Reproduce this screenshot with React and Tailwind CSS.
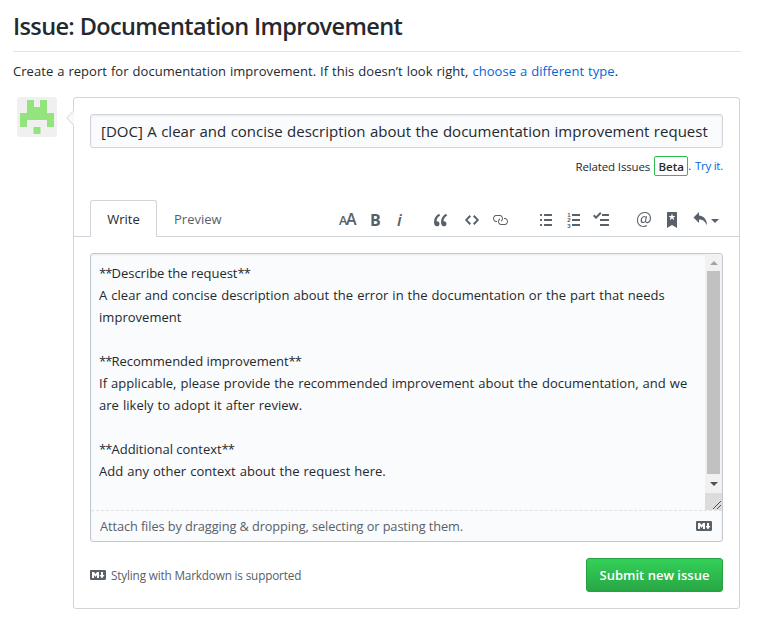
const paths = {
  quote: [14, "M6.16 3.5C3.73 5.06 2.55 6.67 2.55 9.36c.16-.05.3-.05.44-.05 1.27 0 2.5.86 2.5 2.41 0 1.61-1.03 2.61-2.5 2.61-1.9 0-2.99-1.52-2.99-4.25 0-3.8 1.75-6.53 5.02-8.42L6.16 3.5zm7 0c-2.43 1.56-3.61 3.17-3.61 5.86.16-.05.3-.05.44-.05 1.27 0 2.5.86 2.5 2.41 0 1.61-1.03 2.61-2.5 2.61-1.89 0-2.98-1.52-2.98-4.25 0-3.8 1.75-6.53 5.02-8.42l1.14 1.84h-.01z"],
  code: [14, "M9.5 3L8 4.5 11.5 8 8 11.5 9.5 13 14 8 9.5 3zm-5 0L0 8l4.5 5L6 11.5 2.5 8 6 4.5 4.5 3z"],
  link: [16, "M4 9h1v1H4c-1.5 0-3-1.69-3-3.5S2.55 3 4 3h4c1.45 0 3 1.69 3 3.5 0 1.41-.91 2.72-2 3.25V8.59c.58-.45 1-1.27 1-2.09C10 5.22 8.98 4 8 4H4c-.98 0-2 1.22-2 2.5S3 9 4 9zm9-3h-1v1h1c1 0 2 1.22 2 2.5S13.98 12 13 12H9c-.98 0-2-1.22-2-2.5 0-.83.42-1.64 1-2.09V6.25c-1.09.53-2 1.84-2 3.25C6 11.31 7.55 13 9 13h4c1.45 0 3-1.69 3-3.5S14.5 6 13 6z"],
  bullets: [12, "M2 13c0 .59 0 1-.59 1H.59C0 14 0 13.59 0 13c0-.59 0-1 .59-1h.81c.59 0 .59.41.59 1H2zm2.59-9h6.81c.59 0 .59-.41.59-1 0-.59 0-1-.59-1H4.59C4 2 4 2.41 4 3c0 .59 0 1 .59 1zM1.41 7H.59C0 7 0 7.41 0 8c0 .59 0 1 .59 1h.81c.59 0 .59-.41.59-1 0-.59 0-1-.59-1h.01zm0-5H.59C0 2 0 2.41 0 3c0 .59 0 1 .59 1h.81c.59 0 .59-.41.59-1 0-.59 0-1-.59-1h.01zm10 5H4.59C4 7 4 7.41 4 8c0 .59 0 1 .59 1h6.81c.59 0 .59-.41.59-1 0-.59 0-1-.59-1h.01zm0 5H4.59C4 12 4 12.41 4 13c0 .59 0 1 .59 1h6.81c.59 0 .59-.41.59-1 0-.59 0-1-.59-1h.01z"],
  tasks: [16, "M15.41 9H7.59C7 9 7 8.59 7 8c0-.59 0-1 .59-1h7.81c.59 0 .59.41.59 1 0 .59 0 1-.59 1h.01zM9.59 4C9 4 9 3.59 9 3c0-.59 0-1 .59-1h5.81c.59 0 .59.41.59 1 0 .59 0 1-.59 1H9.59zM0 3.91l1.41-1.3L3 4.2 7.09 0 8.5 1.41 3 6.91l-3-3zM7.59 12h7.81c.59 0 .59.41.59 1 0 .59 0 1-.59 1H7.59C7 14 7 13.59 7 13c0-.59 0-1 .59-1z"],
  mention: [14, "M6.58 15c1.25 0 2.52-.31 3.56-.94l-.42-.94c-.84.52-1.89.83-3.03.83-3.23 0-5.64-2.08-5.64-5.72 0-4.37 3.23-7.18 6.58-7.18 3.45 0 5.22 2.19 5.22 5.2 0 2.39-1.34 3.86-2.5 3.86-1.05 0-1.36-.73-1.05-2.19l.73-3.75H8.98l-.11.72c-.41-.63-.94-.83-1.56-.83-2.19 0-3.66 2.39-3.66 4.38 0 1.67.94 2.61 2.3 2.61.84 0 1.67-.53 2.3-1.25.11.94.94 1.45 1.98 1.45 1.67 0 3.77-1.67 3.77-5C14 2.61 11.59 0 7.83 0 3.66 0 0 3.33 0 8.33 0 12.71 2.92 15 6.58 15zm-.31-5c-.73 0-1.36-.52-1.36-1.67 0-1.45.94-3.22 2.41-3.22.52 0 .84.2 1.25.83l-.52 3.02c-.63.73-1.25 1.05-1.78 1.05V10z"],
  bookmark: [10, "M9 0H1C.27 0 0 .27 0 1v15l5-3.09L10 16V1c0-.73-.27-1-1-1zm-.78 4.25L6.36 5.61l.72 2.16c.06.22-.02.28-.2.17L5 6.6 3.12 7.94c-.19.11-.25.05-.2-.17l.72-2.16-1.86-1.36c-.17-.16-.14-.23.09-.23l2.3-.03.7-2.16h.25l.7 2.16 2.3.03c.23 0 .27.08.09.23h.01z"],
  reply: [14, "M6 3.5c3.92.44 8 3.125 8 10-2.312-5.062-4.75-6-8-6V11L.5 5.5 6 0v3.5z"],
  markdown: [16, "M14.85 3H1.15C.52 3 0 3.52 0 4.15v7.69C0 12.48.52 13 1.15 13h13.69c.64 0 1.15-.52 1.15-1.15v-7.7C16 3.52 15.48 3 14.85 3zM9 11H7V8L5.5 9.92 4 8v3H2V5h2l1.5 2L7 5h2v6zm2.99.5L9.5 8H11V5h2v3h1.5l-2.51 3.5z"],
};

function Icon({ name, className = "" }) {
  const [w, d] = paths[name];
  return (
    <svg width={w} height="16" viewBox={`0 0 ${w} 16`} fill="currentColor" fillRule="evenodd" className={`shrink-0 ${className}`}>
      <path d={d} />
    </svg>
  );
}

function OrderedList({ className }) {
  return (
    <svg width="13" height="16" viewBox="0 0 13 16" fill="currentColor" className={`shrink-0 ${className}`}>
      <path d="M5 2h8v2H5zM5 7h8v2H5zM5 12h8v2H5z" />
      <g fontSize="6" fontWeight="700" fontFamily="Liberation Sans, sans-serif">
        <text x="0.3" y="5">1</text>
        <text x="0.3" y="10.3">2</text>
        <text x="0.3" y="15.6">3</text>
      </g>
    </svg>
  );
}

function Toolbar() {
  return (
    <div className="ml-[117px] mt-3 flex h-4 items-center leading-4 text-[#586069]">
      <span className="flex w-[18px] shrink-0 items-baseline font-semibold">
        <span className="text-[12.5px] tracking-[-1.2px]">A</span>
        <span className="text-[16px]">A</span>
      </span>
      <span className="ml-[13px] w-[10px] shrink-0 text-[16px] font-bold">B</span>
      <span className="ml-[17px] w-[6px] shrink-0 text-[17px] font-semibold italic">i</span>
      <Icon name="quote" className="ml-[31px]" />
      <Icon name="code" className="ml-[17px]" />
      <Icon name="link" className="ml-[13px]" />
      <Icon name="bullets" className="ml-[32px]" />
      <OrderedList className="ml-[15px]" />
      <Icon name="tasks" className="ml-[13px]" />
      <Icon name="mention" className="ml-[28px]" />
      <Icon name="bookmark" className="ml-[16px]" />
      <Icon name="reply" className="ml-[16px]" />
      <span className="ml-[4px] mt-px h-0 w-0 border-x-4 border-t-4 border-x-transparent border-t-[#586069]" />
    </div>
  );
}

const body = [
  { heading: "Describe the request" },
  { text: "A clear and concise description about the error in the documentation or the part that needs" },
  { text: "improvement" },
  {},
  { heading: "Recommended improvement" },
  { text: "If applicable, please provide the recommended improvement about the documentation, and we" },
  { text: "are likely to adopt it after review." },
  {},
  { heading: "Additional context" },
  { text: "Add any other context about the request here." },
];

function BodyLine({ heading, text }) {
  if (!heading) {
    return <div className="h-[22px] tracking-[0.035px] [word-spacing:0.55px]">{text}</div>;
  }
  return (
    <div className="h-[22px]">
      <span className="tracking-[-0.9px]">**</span>
      <span className="tracking-[-0.02px]">{heading}</span>
      <span className="tracking-[-0.9px]">**</span>
    </div>
  );
}

function Scrollbar() {
  return (
    <div className="flex w-[17px] shrink-0 flex-col bg-[#f1f1f1]">
      <div className="flex h-[17px] items-center justify-center">
        <span className="mt-px h-0 w-0 border-x-4 border-b-4 border-x-transparent border-b-[#a3a3a3]" />
      </div>
      <div className="mx-0.5 h-[203px] bg-[#c1c1c1]" />
      <div className="flex h-[19px] items-center justify-center">
        <span className="h-0 w-0 border-x-4 border-t-4 border-x-transparent border-t-[#505050]" />
      </div>
      <div className="flex h-[17px] items-end justify-end bg-[#dcdcdc]">
        <svg width="10" height="10" viewBox="0 0 10 10" stroke="#505050" fill="none">
          <path d="M1 9L9 1M5 9L9 5" />
        </svg>
      </div>
    </div>
  );
}

function Avatar() {
  return (
    <svg width="40" height="40" viewBox="0 0 40 40" className="ml-1 shrink-0 rounded-[3px] bg-[#f0f0f0]" fill="#93e47c">
      <path d="M10 3h7v7h6V3h7v13h7v14h-7v-7H10v7H3V16h7zM16.5 30h7v7h-7z" />
    </svg>
  );
}

export default function App() {
  return (
    <div className="h-[620px] w-[757px] overflow-hidden bg-white pl-[13px] font-['Open_Sans','Noto_Sans',sans-serif] text-[#24292e]">
      <h1 className="flex h-[52px] w-[728px] items-center whitespace-nowrap border-b border-[#e1e4e8] pb-px pt-1 text-[23.5px] font-semibold tracking-[-0.63px]">Issue: Documentation Improvement</h1>
      <p className="mt-[8px] h-[22px] whitespace-nowrap text-[13px] leading-[22px] tracking-[0.05px] [word-spacing:0.5px]">
        Create a report for documentation improvement. If this doesn’t look right, <a className="text-[#0366d6]">choose a different type</a>.
      </p>
      <div className="mt-[15px] flex items-start">
        <Avatar />
        <div className="relative ml-4 h-[512px] w-[667px] rounded-[3px] border border-[#d1d5da]">
          <svg width="8" height="16" viewBox="0 0 8 16" className="absolute -left-2 top-3">
            <path d="M8 0L0 8l8 8z" fill="#f6f8fa" />
            <path d="M8 .5L.7 8 8 15.500" fill="none" stroke="#d1d5da" />
          </svg>
          <div className="mx-4 mt-4 flex h-[34px] w-[633px] items-center whitespace-nowrap rounded-[3px] border border-[#d1d5da] bg-[#fafbfc] pl-[10px] text-[15px] tracking-[0.01px] shadow-[inset_0_1px_2px_rgba(27,31,35,0.075)] [word-spacing:0.5px]">
            <span>[DOC] A clear and concise description about the documentation improvement request</span>
          </div>
          <div className="mr-4 mt-2 flex h-5 items-center justify-end whitespace-nowrap text-[11.5px]">
            <span className="mt-px tracking-[-0.13px]">Related Issues</span>
            <span className="ml-1 flex h-5 w-[34px] items-center justify-center rounded-[2px] border border-[#2cbe4e] pt-px font-semibold">Beta</span>
            <span className="tracking-[-0.3px]">.</span>
            <a className="ml-1 tracking-[-0.25px] text-[#0366d6]">Try it.</a>
          </div>
          <div className="mt-6 flex h-[37px] border-b border-[#d1d5da] pl-4 text-[13px]">
            <div className="flex h-[37px] w-[67px] items-center justify-center rounded-t-[3px] border border-b-0 border-[#d1d5da] bg-white pt-px">Write</div>
            <div className="ml-[17px] flex h-[37px] w-[48px] items-center pt-[2px] text-[#586069]">Preview</div>
            <Toolbar />
          </div>
          <div className="mx-4 mt-4 h-[289px] w-[633px] overflow-hidden rounded-[3px] border border-[#c3c8cf] bg-[#fafbfc] shadow-[inset_0_1px_2px_rgba(27,31,35,0.075)]">
            <div className="flex h-[256px]">
              <div className="grow whitespace-pre pl-2 pt-2 text-[13px] leading-[22px]">
                {body.map((line, i) => (
                  <BodyLine key={i} {...line} />
                ))}
              </div>
              <Scrollbar />
            </div>
            <div className="flex h-[31px] items-center justify-between border-t border-dashed border-[#dfe2e5] pl-[9px] pr-[10px] text-[12.75px] text-[#586069]">
              <span className="mt-0.5 tracking-[-0.08px]">Attach files by dragging &amp; dropping, selecting or pasting them.</span>
              <Icon name="markdown" />
            </div>
          </div>
          <div className="mx-4 mt-4 flex h-[34px] items-center justify-between">
            <div className="flex items-center gap-[5px] text-[11.75px] text-[#586069]">
              <Icon name="markdown" />
              <span className="mt-px tracking-[-0.17px]">Styling with Markdown is supported</span>
            </div>
            <button className="h-[34px] w-[137px] whitespace-nowrap rounded-[3px] border border-[#28a03f] bg-linear-to-b from-[#34d058] to-[#28a745] pt-px text-[13px] font-semibold text-white">Submit new issue</button>
          </div>
        </div>
      </div>
    </div>
  );
}
